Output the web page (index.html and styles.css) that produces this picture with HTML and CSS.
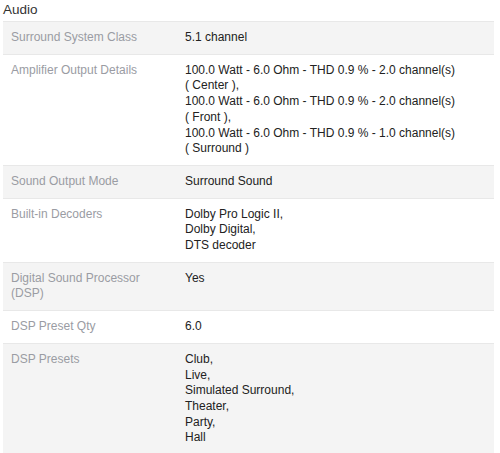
FILE: index.html
```html
<!DOCTYPE html>
<html>
<head>
<meta charset="utf-8">
<link rel="stylesheet" href="styles.css">
</head>
<body>
<div class="spec">
  <h2 class="title">Audio</h2>
  <div class="table">
    <div class="row alt">
      <div class="label">Surround System Class</div>
      <div class="value">5.1 channel</div>
    </div>
    <div class="row">
      <div class="label">Amplifier Output Details</div>
      <div class="value">100.0 Watt - 6.0 Ohm - THD 0.9 % - 2.0 channel(s)<br>( Center ),<br>100.0 Watt - 6.0 Ohm - THD 0.9 % - 2.0 channel(s)<br>( Front ),<br>100.0 Watt - 6.0 Ohm - THD 0.9 % - 1.0 channel(s)<br>( Surround )</div>
    </div>
    <div class="row alt">
      <div class="label">Sound Output Mode</div>
      <div class="value">Surround Sound</div>
    </div>
    <div class="row">
      <div class="label">Built-in Decoders</div>
      <div class="value">Dolby Pro Logic II,<br>Dolby Digital,<br>DTS decoder</div>
    </div>
    <div class="row alt">
      <div class="label">Digital Sound Processor (DSP)</div>
      <div class="value">Yes</div>
    </div>
    <div class="row">
      <div class="label">DSP Preset Qty</div>
      <div class="value">6.0</div>
    </div>
    <div class="row alt">
      <div class="label">DSP Presets</div>
      <div class="value">Club,<br>Live,<br>Simulated Surround,<br>Theater,<br>Party,<br>Hall</div>
    </div>
  </div>
</div>
</body>
</html>
```
FILE: styles.css
```css
html, body {
  margin: 0;
  padding: 0;
  background: #fff;
}
.spec {
  padding: 0 6px 0 3px;
  font-family: "Liberation Sans", Arial, sans-serif;
}
.title {
  margin: 0;
  padding: 2px 0 3px 0;
  font-size: 13.5px;
  font-weight: normal;
  line-height: 16px;
  color: #333;
}
.table {
  display: flex;
  flex-direction: column;
}
.row {
  display: grid;
  grid-template-columns: 174px 1fr;
  padding: 8px 8px 8px 8px;
  border-top: 1px solid #e8e8e8;
  font-size: 12px;
  line-height: 15.7px;
}
.row.alt {
  background: #f4f4f4;
}
.label {
  color: #9a9ca3;
  padding-right: 10px;
}
.value {
  color: #222;
}
```
